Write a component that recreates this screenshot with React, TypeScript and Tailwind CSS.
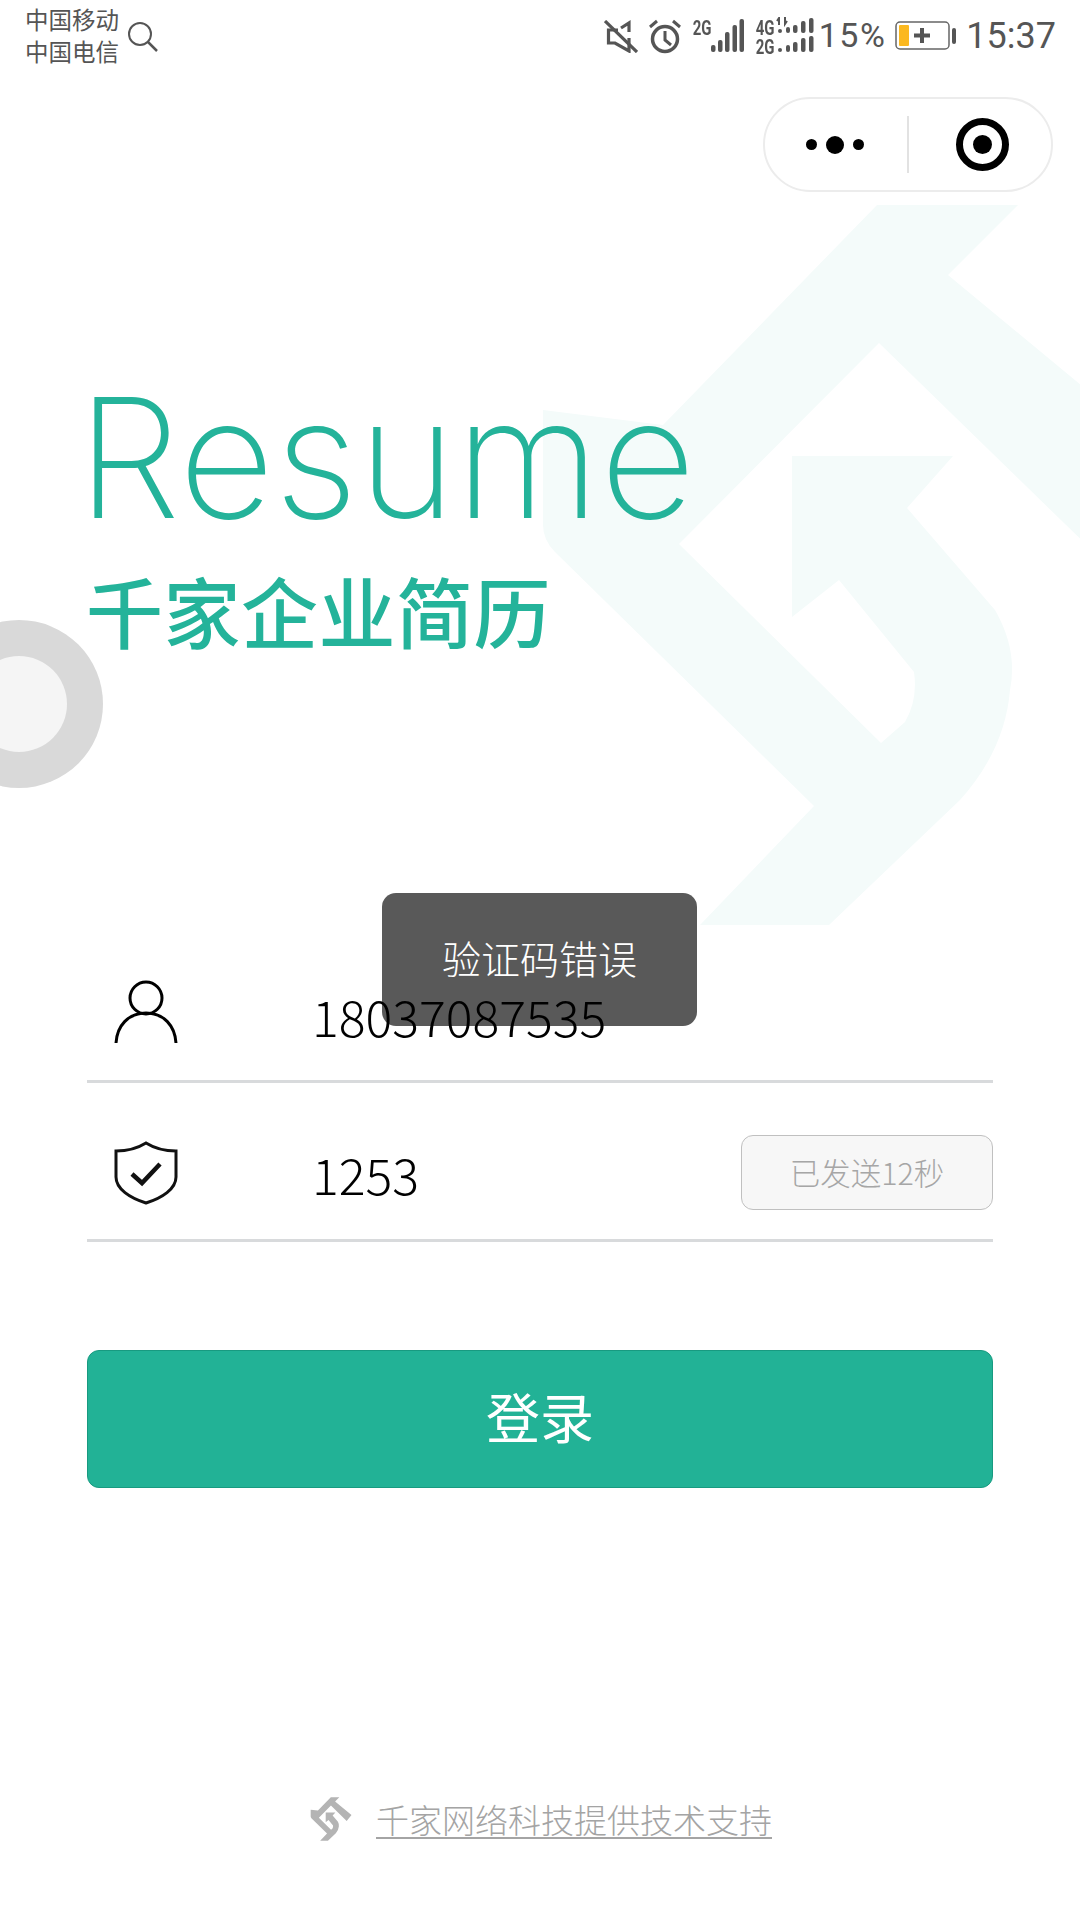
const cjk = "font-['Noto_Sans_CJK_SC',sans-serif]";

// same mark is used for the big watermark and the footer logo
const logoPath =
  "M877 205L1018 205L948 275L1220 500L1140 597L879 343L679 544L881 743L905 722Q918 700 914 672L839 580L792 617L792 456L953 456L907 508L995 610Q1018 650 1010 690Q1005 750 960 800L829 925L700 925L814 806L555 552Q543 540 543 525L543 410L663 425Z";

function Watermark() {
  return (
    <svg className="absolute left-0 top-0" width="1080" height="1000" viewBox="0 0 1080 1000">
      <path fill="#f4fbfa" d={logoPath} />
    </svg>
  );
}

function FooterLogo() {
  return (
    <svg className="blur-[0.6px]" width="46" height="44" viewBox="530 200 700 730">
      <path fill="#b4b4b4" d={logoPath} />
    </svg>
  );
}

function StatusIcons() {
  const tiny = "block w-[18px] origin-top scale-y-[1.3] font-['Roboto',sans-serif] text-[15px] font-bold leading-[14px]";
  return (
    <div className="flex items-start text-[#555555]">
      <svg className="mt-[20px]" width="34" height="33" viewBox="0 0 34 33" fill="none" stroke="#555555" strokeWidth="3.2">
        <path d="M14 10H4.5V23H11L25 31V18M25 12V3L17 8" />
        <path d="M1 1L33 32" />
      </svg>
      <svg className="ml-[10px] mt-[19px]" width="34" height="35" viewBox="0 0 34 35" fill="none" stroke="#555555" strokeWidth="3.5">
        <circle cx="17" cy="20" r="12.5" />
        <path d="M17 12v9l6 5" strokeWidth="3" />
        <path d="M2 8l7-6M32 8l-7-6" strokeWidth="3" />
      </svg>
      <span className={`ml-[11px] mt-[19px] ${tiny}`}>2G</span>
      <svg className="mt-[19px]" width="33" height="34" viewBox="0 0 33 34" fill="#555555">
        <rect x="0" y="26" width="4.5" height="7" rx="2" />
        <rect x="7" y="21" width="4.5" height="12" rx="2" />
        <rect x="14" y="13" width="4.5" height="20" rx="2" />
        <rect x="21.5" y="6" width="4.5" height="27" rx="2" />
        <rect x="28.5" y="0" width="4.5" height="33" rx="2" />
      </svg>
      <div className="ml-[12px] mt-[19px] flex flex-col gap-[5px]">
        <span className={tiny}>4G</span>
        <span className={tiny}>2G</span>
      </div>
      <svg className="ml-[2px] mt-[17px]" width="38" height="36" viewBox="0 0 38 36" fill="#555555">
        <path d="M3 8V1l-2 3M3 1M9 0v7l2-3" stroke="#555555" strokeWidth="2" fill="none" />
        <rect x="2" y="12" width="4" height="4" rx="2" />
        <rect x="10" y="10" width="4" height="6" rx="2" />
        <rect x="17" y="8" width="4.5" height="8" rx="2" />
        <rect x="25" y="4" width="4.5" height="12" rx="2" />
        <rect x="33" y="1" width="4.5" height="15" rx="2" />
        <rect x="2" y="31" width="4" height="4" rx="2" />
        <rect x="10" y="28" width="4" height="7" rx="2" />
        <rect x="17" y="25" width="4.5" height="10" rx="2" />
        <rect x="25" y="21" width="4.5" height="14" rx="2" />
        <rect x="33" y="19" width="4.5" height="16" rx="2" />
      </svg>
      <span className="ml-[5px] mt-[15px] font-['Roboto',sans-serif] text-[34px] leading-[40px] tracking-[1.5px]">15%</span>
      <svg className="ml-[9px] mt-[21px]" width="62" height="30" viewBox="0 0 62 30" fill="none">
        <rect x="1" y="1" width="53" height="27" rx="4" stroke="#666666" strokeWidth="1.5" />
        <rect x="4" y="4" width="10" height="21" rx="1" fill="#fbb81f" />
        <path d="M19 14.5h16M27 7v15" stroke="#555555" strokeWidth="4" />
        <rect x="57" y="7" width="4" height="16" rx="2" fill="#555555" />
      </svg>
      <span className="ml-[9px] mt-[15px] font-['Roboto',sans-serif] text-[36px] leading-[42px]">15:37</span>
    </div>
  );
}

export default function App() {
  return (
    <div className={`relative h-[1920px] w-[1080px] overflow-hidden bg-white ${cjk}`}>
      <Watermark />

      {/* ring on the left edge */}
      <div className="absolute left-[-65px] top-[620px] flex h-[168px] w-[168px] items-center justify-center rounded-full bg-[#d9d9d9]">
        <div className="h-[96px] w-[96px] rounded-full bg-[#f5f5f5]" />
      </div>

      {/* toast goes under the phone number */}
      <div className="absolute left-[382px] top-[893px] flex h-[133px] w-[315px] items-center justify-center rounded-[14px] bg-[#595959] pb-[4px] text-[39px] font-light text-white">
        验证码错误
      </div>

      <div className="relative flex h-[97px] items-start justify-between pl-[25px] pr-[24px]">
        <div className="flex items-start">
          <div className="mt-[3px] text-[23.5px] leading-[32px] text-[#555555]">
            <div>中国移动</div>
            <div>中国电信</div>
          </div>
          <svg className="ml-[8px] mt-[21px]" width="32" height="32" viewBox="0 0 32 32" fill="none" stroke="#555555" strokeWidth="2">
            <circle cx="13" cy="13" r="11" />
            <path d="M21 21l9 9" strokeWidth="2.5" />
          </svg>
        </div>
        <StatusIcons />
      </div>

      <div className="relative flex justify-end pr-[27px]">
        <div className="flex h-[95px] w-[290px] items-center rounded-full border-2 border-[#ececec] bg-white">
          <div className="flex w-[140px] items-center justify-center gap-[9px]">
            <span className="h-[11px] w-[11px] rounded-full bg-black" />
            <span className="h-[18px] w-[18px] rounded-full bg-black" />
            <span className="h-[11px] w-[11px] rounded-full bg-black" />
          </div>
          <div className="ml-[2px] h-[57px] w-[2px] bg-[#e2e2e2]" />
          <div className="flex flex-1 items-center justify-center pl-[4px]">
            <div className="flex h-[53px] w-[53px] items-center justify-center rounded-full border-[7px] border-black">
              <span className="h-[19px] w-[19px] rounded-full bg-black" />
            </div>
          </div>
        </div>
      </div>

      <div className="relative ml-[77px] mt-[181px] font-['Inter',sans-serif] text-[166px] font-[250] leading-[170px] tracking-[0px] text-[#24b39a]">
        Resume
      </div>
      <div className="relative ml-[86px] mt-[22px] text-[77px] font-medium leading-[90px] tracking-[0.5px] text-[#24b39a]">
        千家企业简历
      </div>

      <div className="relative mx-[87px] mt-[299px]">
        <div className="flex h-[129px] items-center border-b-[3px] border-[#d8dadc]">
          <svg className="mb-[10px] ml-[27px]" width="64" height="64" viewBox="0 0 64 64" fill="none" stroke="#000000" strokeWidth="3">
            <circle cx="32" cy="18" r="16" />
            <path d="M2 63C3 46 14 33 32 33C50 33 61 46 62 63" />
          </svg>
          <span className="mb-[5px] ml-[134px] text-[50px] font-light leading-none text-black">18037087535</span>
        </div>
        <div className="flex h-[159px] items-center border-b-[3px] border-[#d8dadc] pt-[23px]">
          <svg className="ml-[27px]" width="64" height="64" viewBox="0 0 64 64" fill="none" stroke="#111111" strokeWidth="3">
            <path d="M2 10C14 10 24 7 32 2C40 7 50 10 62 10V36C62 48 48 57 32 62C16 57 2 48 2 36Z" />
            <path d="M18 33L28 42L46 23" strokeWidth="4.5" />
          </svg>
          <span className="ml-[134px] text-[50px] font-light leading-none text-black">1253</span>
          <div className="ml-auto flex h-[75px] w-[252px] items-center justify-center rounded-[12px] border border-[#c0c0c0] bg-[#f7f7f7] text-[30.5px] font-light text-[#a6a6a6]">
            已发送12秒
          </div>
        </div>

        <div className="mt-[108px] flex h-[138px] items-center justify-center rounded-[12px] border border-[#189a80] bg-[#22b296] pb-[8px] text-[54px] text-white">
          登录
        </div>
      </div>

      <div className="absolute bottom-[79px] left-0 right-0 flex items-center justify-center gap-[22px]">
        <FooterLogo />
        <span className="text-[33px] font-light leading-[42px] text-[#a4a4a4] underline decoration-2 underline-offset-[4px]">千家网络科技提供技术支持</span>
      </div>
    </div>
  );
}
